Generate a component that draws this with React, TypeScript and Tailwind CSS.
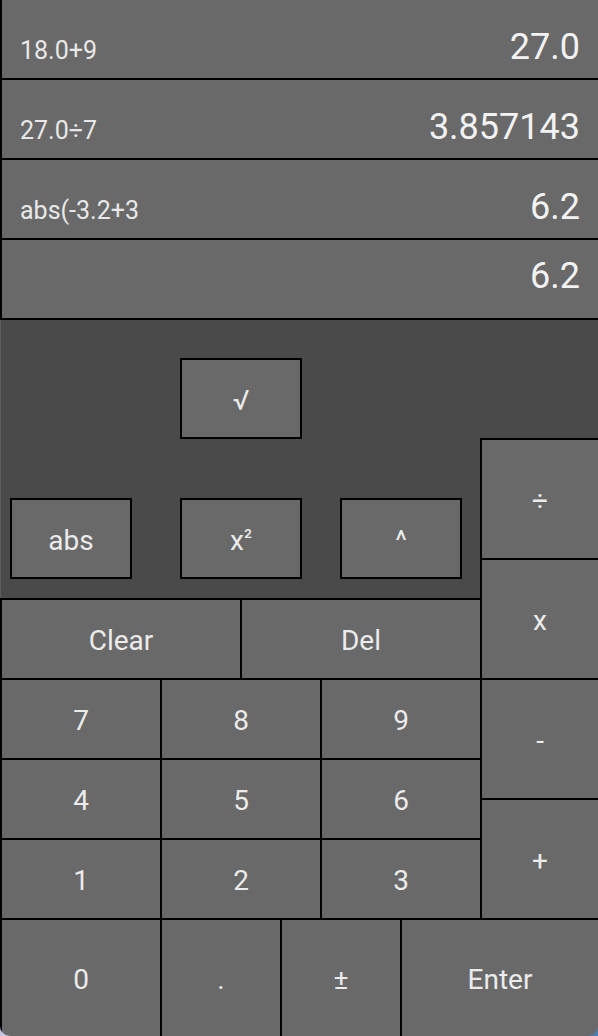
import React from 'react';

function FloatBtn({ children, className = '' }: { children: React.ReactNode; className?: string }) {
  return (
    <div
      className={`w-[122px] h-[81px] border-2 border-black bg-[#696969] flex items-center justify-center pt-[4px] text-[28px] leading-none ${className}`}
    >
      {children}
    </div>
  );
}

function Key({ children, className = '' }: { children: React.ReactNode; className?: string }) {
  return (
    <div className={`border-l-2 border-black flex items-center justify-center pt-[4px] text-[28px] leading-none ${className}`}>
      {children}
    </div>
  );
}

export default function App() {
  const history = [
    { e: '18.0+9', r: '27.0' },
    { e: '27.0÷7', r: '3.857143' },
    { e: 'abs(-3.2+3', r: '6.2' },
  ];
  return (
    <div className="w-[598px] h-[1036px] bg-gradient-to-r from-[#c7c5e3] to-[#4b7fb4] [font-family:Roboto,'Noto_Sans',sans-serif]">
      <div className="w-full h-full rounded-b-[10px] overflow-hidden bg-[#696969] flex flex-col text-[#ebebeb]">
        {history.map((h, i) => (
          <div
            key={i}
            className="h-[80px] shrink-0 border-l-2 border-b-2 border-black flex items-baseline justify-between pl-[18px] pr-[18px] pt-[29px]"
          >
            <span className="text-[25px] leading-none text-[#e8e8e8]">{h.e}</span>
            <span className="text-[36px] leading-none text-[#f2f2f2]">{h.r}</span>
          </div>
        ))}
        <div className="h-[80px] shrink-0 border-l-2 border-b-2 border-black flex items-baseline justify-end pr-[18px] pt-[18px]">
          <span className="text-[36px] leading-none text-[#f2f2f2]">6.2</span>
        </div>

        <div className="flex h-[598px] shrink-0">
          <div className="w-[480px] flex flex-col">
            <div className="h-[278px] bg-[#4a4a4a] border-l border-[#5c5c5c] flex flex-col pt-[38px]">
              <div className="flex pl-[179px]">
                <FloatBtn>√</FloatBtn>
              </div>
              <div className="flex mt-[59px] pl-[9px]">
                <FloatBtn>abs</FloatBtn>
                <FloatBtn className="ml-[48px]">
                  <span>
                    x<span className="align-top text-[22px]">²</span>
                  </span>
                </FloatBtn>
                <FloatBtn className="ml-[38px]">^</FloatBtn>
              </div>
            </div>
            <div className="h-[80px] border-t-2 border-black flex">
              <Key className="w-[240px]">Clear</Key>
              <Key className="w-[240px]">Del</Key>
            </div>
            {[
              ['7', '8', '9'],
              ['4', '5', '6'],
              ['1', '2', '3'],
            ].map((r, i) => (
              <div key={i} className="h-[80px] border-t-2 border-black flex">
                {r.map((d) => (
                  <Key key={d} className="w-[160px]">
                    {d}
                  </Key>
                ))}
              </div>
            ))}
          </div>
          <div className="w-[118px] flex flex-col">
            <div className="h-[118px] bg-[#4a4a4a]" />
            {['÷', 'x', '-', '+'].map((o) => (
              <div
                key={o}
                className="h-[120px] border-t-2 border-l-2 border-black flex items-center justify-center pt-[4px] text-[28px] leading-none"
              >
                {o}
              </div>
            ))}
          </div>
        </div>

        <div className="h-[118px] shrink-0 border-t-2 border-black flex">
          <Key className="w-[160px]">0</Key>
          <Key className="w-[120px]">.</Key>
          <Key className="w-[120px]">±</Key>
          <Key className="flex-1">Enter</Key>
        </div>
      </div>
    </div>
  );
}
